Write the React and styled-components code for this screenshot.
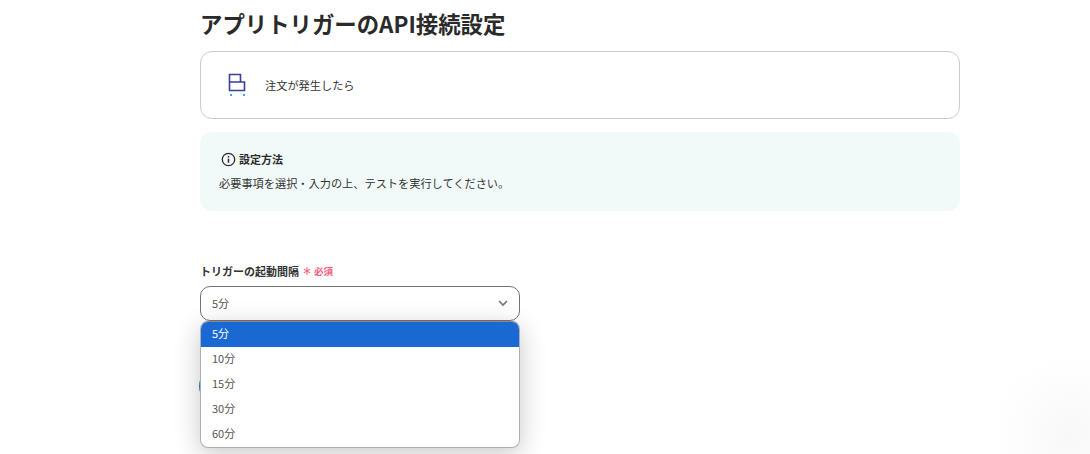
import React from "react";
import styled, { createGlobalStyle } from "styled-components";

const Global = createGlobalStyle`
  html, body { margin: 0; padding: 0; background: #fff; }
  body {
    width: 1090px; height: 454px; overflow: hidden;
    font-family: "Noto Sans CJK JP", "Noto Sans", sans-serif;
    color: #2e2e2e;
  }
  * { box-sizing: border-box; }
`;

const Page = styled.div`
  position: relative;
  width: 1090px;
  height: 454px;
  overflow: hidden;
  display: flex;
  padding-left: 200px;
  &::after {
    content: "";
    position: absolute;
    right: -60px;
    bottom: -60px;
    width: 160px;
    height: 160px;
    border-radius: 50%;
    background: radial-gradient(closest-side, #f8f8f8 0%, #fcfcfc 55%, #ffffff 100%);
    pointer-events: none;
  }
`;

const Column = styled.main`
  width: 760px;
  display: flex;
  flex-direction: column;
`;

const Title = styled.h1`
  margin: 7px 0 12px;
  height: 32px;
  font-size: 22.4px;
  line-height: 32px;
  font-weight: 700;
  color: #2a2a2a;
`;

const TriggerCard = styled.section`
  height: 68px;
  border: 1px solid #cccccc;
  border-radius: 12px;
  display: flex;
  align-items: center;
  gap: 19px;
  padding-left: 27px;
`;

const CardText = styled.span`
  font-size: 11.2px;
  line-height: 18px;
  color: #333;
`;

const InfoBox = styled.section`
  margin-top: 13px;
  height: 79px;
  border-radius: 12px;
  background: #f1faf9;
  padding: 18px 19px 0;
  display: flex;
  flex-direction: column;
  gap: 6px;
`;

const InfoHead = styled.div`
  display: flex;
  align-items: center;
  gap: 3px;
  padding-left: 2px;
  height: 18px;
  font-size: 11px;
  font-weight: 700;
  color: #2a2a2a;
`;

const InfoBody = styled.p`
  margin: 0;
  font-size: 11.2px;
  line-height: 18px;
  color: #333;
`;

const Field = styled.div`
  position: relative;
  margin-top: 51px;
  width: 320px;
`;

const Label = styled.div`
  display: flex;
  align-items: center;
  height: 18px;
  gap: 4px;
  font-size: 11px;
  font-weight: 700;
  color: #333;
`;

const Required = styled.span`
  display: inline-flex;
  align-items: center;
  gap: 3px;
  font-size: 9.5px;
  font-weight: 700;
  color: #fb5b7a;
`;

const SelectBox = styled.div`
  margin-top: 6px;
  height: 35px;
  border: 1px solid #737373;
  border-radius: 10px;
  background: #fff;
  display: flex;
  align-items: center;
  justify-content: space-between;
  padding: 0 10px 2px 11px;
  font-size: 11px;
  color: #555;
`;

const HiddenButton = styled.div`
  position: absolute;
  left: -1px;
  top: 106px;
  width: 160px;
  height: 36px;
  border-radius: 18px;
  background: #1a8aa8;
`;

const Dropdown = styled.ul`
  position: absolute;
  left: 0;
  top: 59px;
  width: 320px;
  height: 127px;
  margin: 0;
  padding: 0;
  list-style: none;
  background: #fff;
  border: 1px solid #b0b0b0;
  border-top-color: #8b8b8b;
  border-radius: 8px;
  overflow: hidden;
  box-shadow: 0 6px 26px rgba(0, 0, 0, 0.22);
`;

const Option = styled.li`
  height: 25px;
  display: flex;
  align-items: center;
  padding: 0 0 4px 11px;
  font-size: 11px;
  background: ${(p) => (p.$selected ? "#1a69d2" : "transparent")};
  color: ${(p) => (p.$selected ? "#fff" : "#555")};
`;

const CartIcon = () => (
  <svg width="18" height="24" viewBox="0 0 18 24" fill="none">
    <path d="M1.5 1.5H12.5V9H16.5V17.5H1.5Z M1.5 9H12.5" stroke="#3c3c9a" strokeWidth="1.6" />
    <rect x="2" y="21" width="2" height="2" fill="#3fa2f0" />
    <rect x="15" y="21" width="2" height="2" fill="#3fa2f0" />
  </svg>
);

const InfoIcon = () => (
  <svg width="15" height="15" viewBox="0 0 14 14" fill="none">
    <circle cx="7" cy="7" r="5.8" stroke="#2a2a2a" strokeWidth="1.2" />
    <path d="M7 6.2V10" stroke="#2a2a2a" strokeWidth="1.4" />
    <rect x="6.3" y="3.7" width="1.4" height="1.4" fill="#2a2a2a" />
  </svg>
);

const Asterisk = () => (
  <svg width="8" height="8" viewBox="0 0 8 8" fill="none" stroke="#fb5b7a" strokeWidth="1.1">
    <path d="M4 0.3V7.7M0.8 2.1L7.2 5.9M7.2 2.1L0.8 5.9" />
  </svg>
);

const Chevron = () => (
  <svg width="12" height="8" viewBox="0 0 12 8" fill="none">
    <path d="M2 2L6 6L10 2" stroke="#777" strokeWidth="1.7" />
  </svg>
);

const options = ["5分", "10分", "15分", "30分", "60分"];

export default function App() {
  return (
    <Page>
      <Global />
      <Column>
        <Title>アプリトリガーのAPI接続設定</Title>
        <TriggerCard>
          <CartIcon />
          <CardText>注文が発生したら</CardText>
        </TriggerCard>
        <InfoBox>
          <InfoHead>
            <InfoIcon />
            設定方法
          </InfoHead>
          <InfoBody>必要事項を選択・入力の上、テストを実行してください。</InfoBody>
        </InfoBox>
        <Field>
          <Label>
            トリガーの起動間隔
            <Required>
              <Asterisk />
              必須
            </Required>
          </Label>
          <SelectBox>
            5分
            <Chevron />
          </SelectBox>
          <HiddenButton />
          <Dropdown>
            {options.map((o, i) => (
              <Option key={o} $selected={i === 0}>
                {o}
              </Option>
            ))}
          </Dropdown>
        </Field>
      </Column>
    </Page>
  );
}
